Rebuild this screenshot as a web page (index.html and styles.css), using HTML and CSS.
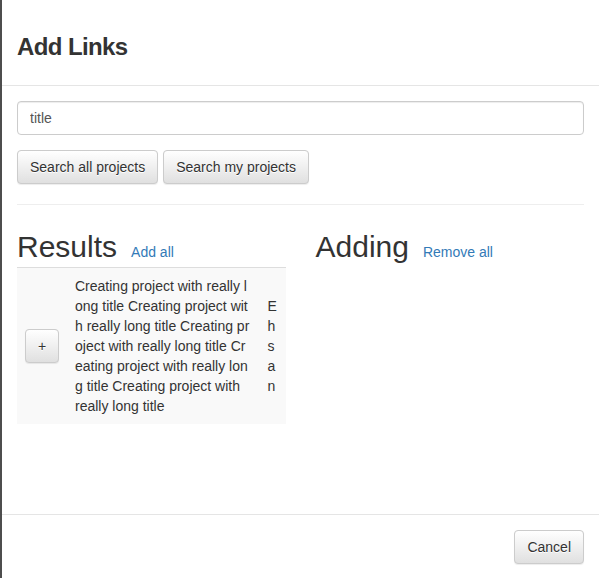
FILE: index.html
```html
<!DOCTYPE html>
<html lang="en">
<head>
<meta charset="utf-8">
<title>Add Links</title>
<link rel="stylesheet" href="styles.css">
</head>
<body>
<div class="modal">
  <div class="modal-header">
    <h3 class="modal-title">Add Links</h3>
  </div>
  <div class="modal-body">
    <form class="search">
      <input class="form-control" type="text" value="title">
      <div class="search-buttons">
        <button type="button" class="btn">Search all projects</button>
        <button type="button" class="btn">Search my projects</button>
      </div>
    </form>
    <hr class="divider">
    <div class="cols">
      <div class="col">
        <h2 class="col-title">Results<a class="head-link" href="#">Add all</a></h2>
        <table class="results">
          <colgroup><col class="c-btn"><col><col class="c-author"></colgroup>
          <tbody>
            <tr>
              <td class="cell-btn"><button type="button" class="btn btn-add">+</button></td>
              <td class="cell-title">Creating project with really l<br>ong title Creating project wit<br>h really long title Creating pr<br>oject with really long title Cr<br>eating project with really lon<br>g title Creating project with<br>really long title</td>
              <td class="cell-author">Ehsan</td>
            </tr>
          </tbody>
        </table>
      </div>
      <div class="col">
        <h2 class="col-title">Adding<a class="head-link" href="#">Remove all</a></h2>
      </div>
    </div>
  </div>
  <div class="modal-footer">
    <button type="button" class="btn">Cancel</button>
  </div>
</div>
</body>
</html>
```

FILE: styles.css
```css
html, body {
  margin: 0;
  padding: 0;
}
body {
  background: #4d4d4d;
  font-family: "Liberation Sans", Arial, sans-serif;
  font-size: 14px;
  line-height: 20px;
  color: #333;
  overflow: hidden;
}
.modal {
  margin-left: 2px;
  height: 579px;
  background: #fff;
  display: flex;
  flex-direction: column;
}
.modal-header {
  padding: 0 15px 15px;
  border-bottom: 1px solid #e5e5e5;
}
.modal-title {
  margin: 34px 0 10px;
  font-size: 24px;
  line-height: 26px;
  font-weight: 700;
  letter-spacing: -0.6px;
  color: #333;
}
.modal-body {
  flex: 1;
  padding: 15px;
}
.search {
  margin: 0;
}
.form-control {
  display: block;
  box-sizing: border-box;
  width: 100%;
  height: 34px;
  margin: 0 0 15px;
  padding: 6px 12px;
  font-family: inherit;
  font-size: 14px;
  line-height: 20px;
  color: #555;
  background: #fff;
  border: 1px solid #ccc;
  border-radius: 4px;
  box-shadow: inset 0 1px 1px rgba(0,0,0,.075);
  outline: none;
}
.search-buttons {
  display: flex;
  gap: 5px;
}
.btn {
  display: inline-block;
  box-sizing: border-box;
  height: 34px;
  padding: 6px 12px;
  font-family: inherit;
  font-size: 14px;
  line-height: 20px;
  color: #333;
  text-shadow: 0 1px 0 #fff;
  background-color: #e0e0e0;
  background-image: linear-gradient(to bottom, #fff 0, #e0e0e0 100%);
  border: 1px solid #ccc;
  border-radius: 4px;
  box-shadow: inset 0 1px 0 rgba(255,255,255,.15), 0 1px 1px rgba(0,0,0,.075);
  cursor: pointer;
}
.divider {
  margin: 20px 0 0;
  border: 0;
  border-top: 1px solid #eee;
  height: 0;
}
.cols {
  display: grid;
  grid-template-columns: 1fr 1fr;
  column-gap: 30px;
}
.col-title {
  margin: 25px 0 4px;
  font-size: 30px;
  line-height: 33px;
  font-weight: 500;
  color: #333;
  white-space: nowrap;
}
.head-link {
  margin-left: 14px;
  font-size: 14px;
  line-height: 1;
  color: #337ab7;
  text-decoration: none;
}
.results {
  width: 100%;
  table-layout: fixed;
  border-collapse: collapse;
  border-spacing: 0;
}
.c-btn { width: 50px; }
.c-author { width: 26px; }
.results td {
  padding: 8px;
  vertical-align: middle;
  border-top: 1px solid #ddd;
  background: #f9f9f9;
  line-height: 20px;
}
.cell-title {
  color: #333;
}
.cell-author {
  word-break: break-all;
}
.btn-add {
  width: 34px;
  padding: 6px 0;
  text-align: center;
}
.modal-footer {
  padding: 15px;
  border-top: 1px solid #e5e5e5;
  display: flex;
  justify-content: flex-end;
}
```
